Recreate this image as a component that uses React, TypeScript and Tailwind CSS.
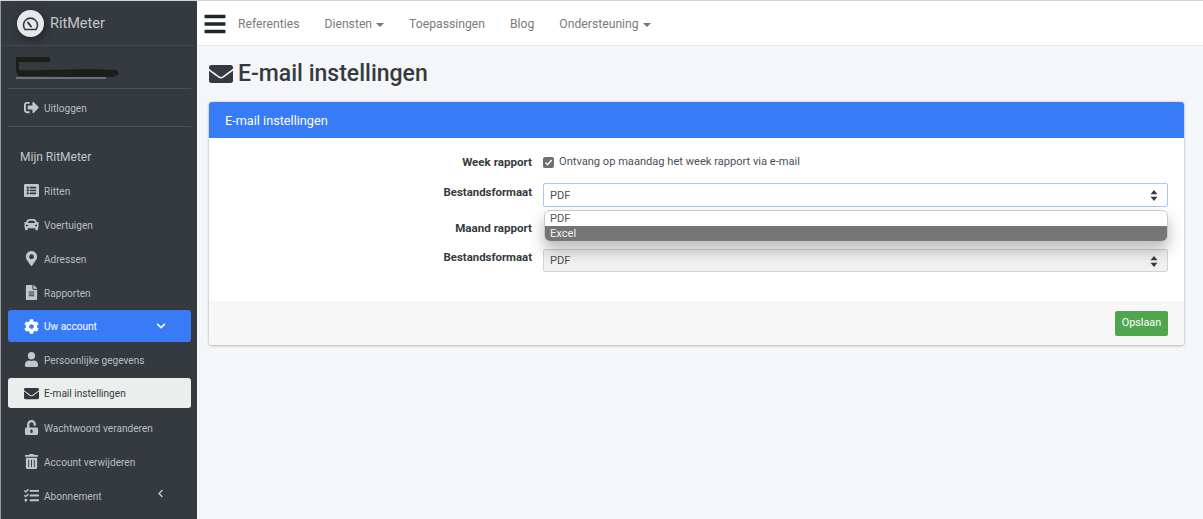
import {
  FaBars,
  FaCar,
  FaChevronDown,
  FaChevronLeft,
  FaCog,
  FaEnvelope,
  FaFileAlt,
  FaListAlt,
  FaMapMarkerAlt,
  FaSignOutAlt,
  FaTasks,
  FaTrashAlt,
  FaUnlockAlt,
  FaUser,
} from "react-icons/fa";
import type { IconType } from "react-icons";

function Updown() {
  return (
    <svg width="8" height="11" viewBox="0 0 8 11" className="fill-[#343a40]">
      <path d="M4 0 7.5 4.2H.5zM4 11 .5 6.8h7z" />
    </svg>
  );
}

function Caret() {
  return <span className="ml-[4px] inline-block border-x-[4px] border-t-[4px] border-x-transparent border-t-[#777] align-middle" />;
}

function NavItem({ icon: Icon, label, size = 15 }: { icon: IconType; label: string; size?: number }) {
  return (
    <div className="flex h-[34px] items-center pl-[20px] text-[#b9bdc0]">
      <span className="flex w-[20px] justify-center pb-[1px] text-[#c2c7cb]">
        <Icon size={size} />
      </span>
      <span className="ml-[3px] pt-[1px] text-[10.1px]">{label}</span>
    </div>
  );
}

function Sidebar() {
  return (
    <aside className="flex h-full w-[197px] shrink-0 flex-col border-l border-[#9a9a9a] bg-[#343a40]">
      <div className="flex h-[45px] shrink-0 items-center border-b border-[#42484e] pl-[16px] pt-[1px]">
        <span className="flex h-[27px] w-[27px] items-center justify-center rounded-full bg-[#e8e8e8] shadow-[2px_3px_8px_rgba(0,0,0,0.35)]">
          <svg width="17" height="14" viewBox="0 0 17 14" fill="none" stroke="#343a40" strokeWidth="1.6">
            <path d="M3 12.5a7 7 0 1 1 11 0z" />
            <path d="M6 5.5 9 9.5" strokeWidth="2" strokeLinecap="round" />
          </svg>
        </span>
        <span className="ml-[6px] text-[14.5px] text-[#c2c7cb]">RitMeter</span>
      </div>

      <div className="ml-[7px] mr-[6px] h-[43px] shrink-0 border-b border-[#4b5157] pt-[9px]">
        <svg width="112" height="26" viewBox="0 0 112 26">
          <path d="M8 2h34v5H11v8c20 1 45-1 72-1l26 1 2 4-5 3H70l-60-1-2-5z" fill="#1d1d1d" />
          <path d="M8 22h90v2H8z" fill="#6b7177" />
        </svg>
      </div>

      <div className="ml-[7px] mr-[6px] shrink-0 border-b border-[#4b5157]">
        <div className="-ml-[7px] h-[37px] pt-[2px]">
          <NavItem icon={FaSignOutAlt} label="Uitloggen" />
        </div>
      </div>

      <div className="flex h-[47px] shrink-0 items-end pb-[8px] pl-[19px] text-[12px] text-[#c2c7cb]">Mijn RitMeter</div>

      <NavItem icon={FaListAlt} label="Ritten" />
      <NavItem icon={FaCar} label="Voertuigen" />
      <NavItem icon={FaMapMarkerAlt} label="Adressen" />
      <NavItem icon={FaFileAlt} label="Rapporten" />

      <div className="ml-[7px] mr-[6px] flex h-[32px] shrink-0 items-center rounded-[3px] bg-[#377bf6] pl-[13px] text-white">
        <span className="flex w-[20px] justify-center">
          <FaCog size={15} />
        </span>
        <span className="ml-[3px] pt-[1px] text-[10.1px]">Uw account</span>
        <FaChevronDown size={10} className="ml-auto mr-[25px]" />
      </div>

      <div className="mt-[1px]">
        <NavItem icon={FaUser} label="Persoonlijke gegevens" />
      </div>
      <div className="ml-[7px] mr-[6px] mt-[1px] flex h-[30px] shrink-0 items-center rounded-[3px] bg-[#eceeee] pl-[13px] text-[#343a40]">
        <span className="flex w-[20px] justify-center">
          <FaEnvelope size={15} />
        </span>
        <span className="ml-[3px] pt-[2px] text-[10.1px]">E-mail instellingen</span>
      </div>
      <div className="mt-[3px]">
        <NavItem icon={FaUnlockAlt} label="Wachtwoord veranderen" />
      </div>
      <NavItem icon={FaTrashAlt} label="Account verwijderen" />
      <div className="relative">
        <NavItem icon={FaTasks} label="Abonnement" />
        <FaChevronLeft size={9} className="absolute right-[32px] top-[10px] text-[#c2c7cb]" />
      </div>
    </aside>
  );
}

function Topbar() {
  return (
    <header className="flex h-[45px] shrink-0 items-center gap-[25px] border-b border-[#e4e6ea] bg-white pl-[6px] pt-[2px] text-[12.2px] text-[#7c7c7c]">
      <FaBars size={24} className="mr-[-14px] text-[#23272b]" />
      <span>Referenties</span>
      <span>
        Diensten
        <Caret />
      </span>
      <span>Toepassingen</span>
      <span>Blog</span>
      <span>
        Ondersteuning
        <Caret />
      </span>
    </header>
  );
}

function EmailForm() {
  return (
    <div className="grid grid-cols-[323px_625px] content-start pt-[12px] text-[11.1px] text-[#495057]">
      <div className="flex h-[24px] items-center justify-end pt-[2px] text-[11.6px] font-bold text-[#343a40]">Week rapport</div>
      <div className="ml-[11px] flex h-[24px] items-center pt-[1px]">
        <span className="flex h-[11px] w-[11px] items-center justify-center rounded-[2px] bg-[#6f6f6f]">
          <svg width="9" height="9" viewBox="0 0 9 9" fill="none" stroke="white" strokeWidth="1.4">
            <path d="M1.5 4.5 3.7 6.8 7.6 2" />
          </svg>
        </span>
        <span className="ml-[5px] whitespace-nowrap">Ontvang op maandag het week rapport via e-mail</span>
      </div>

      <div className="mt-[8px] flex h-[24px] items-start justify-end pt-[2px] text-[11.4px] font-bold text-[#343a40]">Bestandsformaat</div>
      <div className="relative mt-[9px] ml-[11px] w-[625px]">
        <div className="flex h-[24px] items-center justify-between rounded-[2px] border border-[#a9c9f5] bg-white pl-[6px] pr-[9px] pt-[2px]">
          PDF
          <span className="-mt-[2px]">
            <Updown />
          </span>
        </div>
        <div className="absolute left-[1px] right-0 top-[27px] z-10 overflow-hidden rounded-[6px] border border-[#c9c9c9] bg-white leading-[15px] shadow-[0_8px_16px_rgba(0,0,0,0.28)]">
          <div className="h-[15px] pl-[5px] text-[#555]">PDF</div>
          <div className="h-[15px] bg-[#757575] pl-[5px] text-[#f2f2f2]">Excel</div>
        </div>
      </div>

      <div className="mt-[9px] flex h-[24px] items-center justify-end pt-[1px] text-[11.6px] font-bold text-[#343a40]">Maand rapport</div>
      <div className="mt-[9px] h-[24px]" />

      <div className="mt-[8px] flex h-[24px] items-start justify-end pt-[1px] text-[11.4px] font-bold text-[#343a40]">Bestandsformaat</div>
      <div className="mt-[9px] ml-[11px] flex h-[23px] w-[625px] items-center justify-between rounded-[2px] border border-[#ced4da] bg-[#f1f1f1] pl-[6px] pr-[9px] pt-[1px]">
        PDF
        <Updown />
      </div>
    </div>
  );
}

export default function App() {
  return (
    <div className="flex h-[519px] w-[1203px] overflow-hidden border-t border-[#d5d5d5] bg-[#f4f6f9] font-['Roboto','Noto_Sans',sans-serif]">
      <Sidebar />
      <main className="flex min-w-0 flex-1 flex-col">
        <Topbar />
        <div className="px-[12px]">
          <h1 className="flex h-[56px] items-center pb-[1px] text-[23px] font-medium leading-none text-[#343a40]">
            <FaEnvelope size={24} className="mr-[5px]" />
            E-mail instellingen
          </h1>
          <section className="w-[975px] overflow-hidden rounded-[3px] bg-white shadow-[0_0_2px_rgba(0,0,0,0.2),0_1px_3px_rgba(0,0,0,0.2)]">
            <div className="flex h-[36px] items-center bg-[#377bf6] pl-[16px] pt-[1px] text-[12.7px] text-white">E-mail instellingen</div>
            <div className="h-[163px]">
              <EmailForm />
            </div>
            <div className="flex h-[44px] items-center justify-end bg-[#f7f7f7] pr-[16px]">
              <button className="h-[25px] w-[53px] rounded-[2px] bg-[#4fa64f] text-[10.8px] text-white">Opslaan</button>
            </div>
          </section>
        </div>
      </main>
    </div>
  );
}
